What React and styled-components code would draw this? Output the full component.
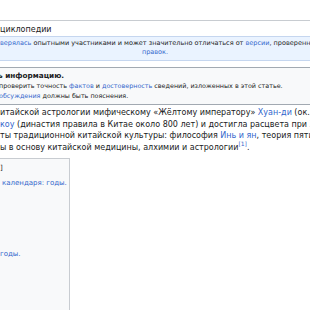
import React from 'react';
import styled, { createGlobalStyle } from 'styled-components';

const GlobalStyle = createGlobalStyle`
    body {
        margin: 0;
        background: #fff;
        overflow: hidden;
        font-family: "DejaVu Sans", "Liberation Sans", sans-serif;
        color: #202122;
    }
`;

const Page = styled.div`
    width: 310px;
    height: 310px;
    overflow: hidden;
    padding-top: 20px;
    box-sizing: border-box;
`;

const HeadingRule = styled.div`
    border-bottom: 1px solid #c8ccd1;
`;

const SiteSub = styled.div`
    font-size: 8px;
    line-height: 10px;
    padding: 4px 0 1px;
    white-space: nowrap;
`;

const Notice = styled.div`
    background: #eaf3ff;
    border-top: 1px solid #c5d6ef;
    border-bottom: 1px solid #c5d6ef;
    font-size: 6.5px;
    padding: 2px 0 3px;
`;

const Line = styled.div`
    white-space: nowrap;
    line-height: ${p => p.$lh || 9}px;
    text-align: ${p => (p.$center ? 'center' : 'left')};
    font-weight: ${p => (p.$bold ? 'bold' : 'normal')};
    font-size: ${p => (p.$size ? `${p.$size}px` : 'inherit')};
    margin-left: ${p => p.$shift || 0}px;
`;

const Link = styled.a`
    color: #3366cc;
    text-decoration: none;
`;

const Ambox = styled.div`
    margin-top: 6px;
    background: #f8f9fa;
    border-top: 1px solid #a2a9b1;
    border-bottom: 1px solid #a2a9b1;
    font-size: 6.4px;
    padding: 2px 0 3px;
`;

const Paragraph = styled.div`
    margin-top: 2px;
    font-size: 8px;
`;

const Ref = styled.sup`
    font-size: 6px;
    line-height: 0;
    color: #3366cc;
`;

const InfoBox = styled.div`
    margin-top: 4px;
    width: 70px;
    height: 160px;
    box-sizing: border-box;
    background: #f8f9fa;
    border-top: 1px solid #c8ccd1;
    border-right: 1px solid #c8ccd1;
    font-size: 7px;
    padding-top: 5px;
    display: flex;
    flex-direction: column;
`;

const InfoRow = styled.div`
    white-space: nowrap;
    line-height: 9px;
    padding-left: ${p => p.$indent || 0}px;
    margin-bottom: ${p => p.$gap || 0}px;
`;

export default function App() {
    return (
        <>
            <GlobalStyle />
            <Page>
                <HeadingRule />
                <SiteSub>циклопедии</SiteSub>
                <Notice>
                    <Line>
                        <Link>верялась</Link> опытными участниками и может значительно отличаться от <Link>версии</Link>, проверенной
                    </Line>
                    <Line $center><Link>правок.</Link></Line>
                </Notice>
                <Ambox>
                    <Line $bold $size={7.3} $lh={11} $shift={-2}>ь информацию.</Line>
                    <Line $lh={10} $shift={-1}>
                        проверить точность <Link>фактов</Link> и <Link>достоверность</Link> сведений, изложенных в этой статье.
                    </Line>
                    <Line $lh={10} $shift={-1}>
                        <Link>обсуждения</Link> должны быть пояснения.
                    </Line>
                </Ambox>
                <Paragraph>
                    <Line $lh={11.7}>
                        итайской астрологии мифическому «Жёлтому императору» <Link>Хуан-ди</Link> (ок. 2600 до н. э.)
                    </Line>
                    <Line $lh={11.7}>
                        <Link>коу</Link> (династия правила в Китае около 800 лет) и достигла расцвета при <Link>Ханьской</Link>
                    </Line>
                    <Line $lh={11.7}>
                        ты традиционной китайской культуры: философия <Link>Инь и ян</Link>, теория пяти элементов
                    </Line>
                    <Line $lh={11.7}>
                        ы в основу китайской медицины, алхимии и астрологии<Ref>[1]</Ref>.
                    </Line>
                </Paragraph>
                <InfoBox>
                    <InfoRow $gap={6}>]</InfoRow>
                    <InfoRow $indent={2} $gap={62}><Link>календаря: годы.</Link></InfoRow>
                    <InfoRow><Link>годы.</Link></InfoRow>
                </InfoBox>
            </Page>
        </>
    );
}
